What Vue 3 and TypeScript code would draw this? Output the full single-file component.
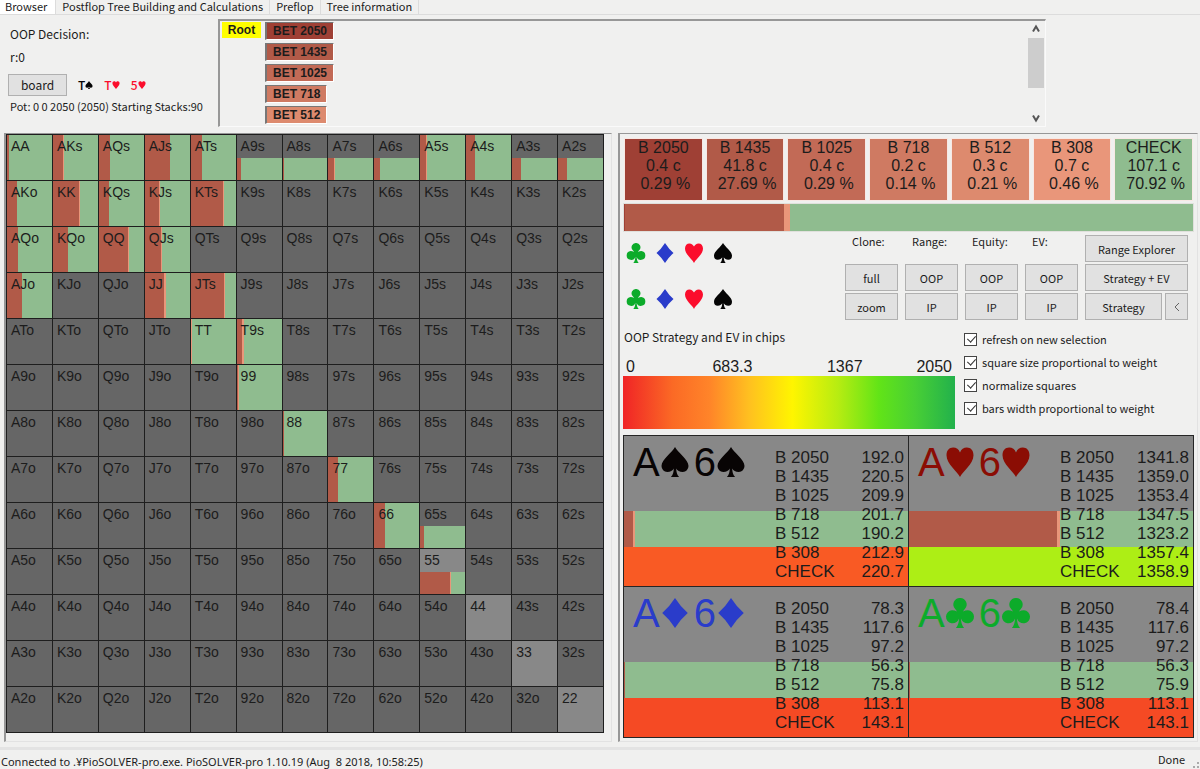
<script setup lang="ts">
import { ref } from 'vue'

type Suit = 'club' | 'diamond' | 'heart' | 'spade'

interface Cell {
  name: string
  red: number
  pink: number
  height: number
  light: boolean
}

const BET = '#b15a48'
const EDGE = '#e9967a'
const CHECK = '#8fbc8f'

const tabs = ['Browser', 'Postflop Tree Building and Calculations', 'Preflop', 'Tree information']

const suitPaths: Record<Suit, string> = {
  club: 'M10 0a4.3 4.3 0 0 1 3.2 7.3c-.4.5-.9 1-1.2 1.7 1-.6 2.1-.9 3.3-.9a4.4 4.4 0 1 1-4.6 5.6c0 2.5.6 4.7 2 6.300H7.300c1.400-1.600 2-3.800 2-6.300A4.400 4.400 0 1 1 4.700 8.100c1.200 0 2.300.3 3.300.9-.3-.7-.8-1.200-1.200-1.700A4.300 4.300 0 0 1 10 0z',
  diamond: 'M10 0Q13.800 6 18.500 10Q13.800 14 10 20Q6.200 14 1.500 10Q6.200 6 10 0z',
  heart: 'M10 20C8.600 16.500 1 11.500 1 5.500C1 2.200 3 .4 5.400 .4C7.600 .4 9.200 1.700 10 3.600C10.800 1.700 12.400 .4 14.600 .4C17 .4 19 2.200 19 5.500C19 11.500 11.400 16.500 10 20z',
  spade: 'M10 0C11.600 3.500 19 8.300 19 12.700A4 4 0 0 1 15.200 16.700C13 16.700 11.600 15.600 10.800 14.300C10.900 16.600 11.300 18.500 12.700 20H7.300C8.700 18.500 9.100 16.600 9.200 14.300C8.400 15.600 7 16.700 4.800 16.700A4 4 0 0 1 1 12.700C1 8.300 8.400 3.500 10 0z',
}
const suits: Suit[] = ['club', 'diamond', 'heart', 'spade']

const board: { rank: string; suit: Suit }[] = [
  { rank: 'T', suit: 'spade' },
  { rank: 'T', suit: 'heart' },
  { rank: '5', suit: 'heart' },
]

const actions = [
  { label: 'B 2050', node: 'BET 2050', combos: '0.4 c', share: '0.29 %', color: '#9f4035' },
  { label: 'B 1435', node: 'BET 1435', combos: '41.8 c', share: '27.69 %', color: '#b15a48' },
  { label: 'B 1025', node: 'BET 1025', combos: '0.4 c', share: '0.29 %', color: '#c26a56' },
  { label: 'B 718', node: 'BET 718', combos: '0.2 c', share: '0.14 %', color: '#cf7a62' },
  { label: 'B 512', node: 'BET 512', combos: '0.3 c', share: '0.21 %', color: '#dd8a6e' },
  { label: 'B 308', node: 'BET 308', combos: '0.7 c', share: '0.46 %', color: '#e9967a' },
  { label: 'CHECK', node: 'CHECK', combos: '107.1 c', share: '70.92 %', color: '#8fbc8f' },
]
const treeNodes = actions.slice(0, 5)

// [bet share %, small bet share %, weight %]
const mix: Record<string, [number, number, number]> = {
  AA: [4, 0, 100], AKs: [22, 2, 100], AQs: [24, 0, 100], AJs: [56, 0, 100], ATs: [24, 0, 100],
  A9s: [9, 0, 50], A8s: [2, 0, 50], A7s: [13, 3, 50], A6s: [13, 0, 50], A5s: [13, 3, 100],
  A4s: [20, 0, 100], A3s: [20, 0, 50], A2s: [20, 0, 50],
  AKo: [22, 0, 100], KK: [57, 2, 100], KQs: [22, 0, 100], KJs: [32, 2, 100], KTs: [71, 2, 100],
  AQo: [25, 0, 100], KQo: [33, 0, 100], QQ: [64, 3, 100], QJs: [35, 2, 100],
  AJo: [34, 0, 100], JJ: [43, 3, 100], JTs: [73, 2, 100],
  TT: [1, 2, 100], T9s: [12, 3, 100], '99': [2, 2, 100], '88': [2, 0, 100],
  '77': [22, 0, 100], '66': [24, 0, 100], '65s': [8, 0, 50], '55': [67, 3, 50],
}
const lightHands = ['55', '44', '33', '22']

const ranks = 'AKQJT98765432'.split('')
const matrix: Cell[][] = ranks.map((row, r) =>
  ranks.map((col, c) => {
    const name = r === c ? row + col : r < c ? row + col + 's' : col + row + 'o'
    const [red, pink, height] = mix[name] ?? [0, 0, 0]
    return { name, red, pink, height, light: lightHands.includes(name) }
  }),
)

function stripe(red: number, pink: number): string {
  return `linear-gradient(90deg, ${BET} ${red}%, ${EDGE} ${red}% ${red + pink}%, ${CHECK} ${red + pink}%)`
}

function cellStyle(cell: Cell) {
  if (!cell.height) return undefined
  return { backgroundImage: stripe(cell.red, cell.pink), backgroundSize: `100% ${cell.height}%` }
}

const combos: { suit: Suit; color: string; red: number; pink: number; ev: string; values: string[] }[] = [
  { suit: 'spade', color: '#080404', red: 3, pink: 1, ev: '#f95a24', values: ['192.0', '220.5', '209.9', '201.7', '190.2', '212.9', '220.7'] },
  { suit: 'heart', color: '#8b0d04', red: 52, pink: 1, ev: '#adee15', values: ['1341.8', '1359.0', '1353.4', '1347.5', '1323.2', '1357.4', '1358.9'] },
  { suit: 'diamond', color: '#2a3cca', red: 0, pink: 0, ev: '#f54a24', values: ['78.3', '117.6', '97.2', '56.3', '75.8', '113.1', '143.1'] },
  { suit: 'club', color: '#0cab2a', red: 0, pink: 0, ev: '#f54a24', values: ['78.4', '117.6', '97.2', '56.3', '75.9', '113.1', '143.1'] },
]

const options = ref([
  { id: 'refresh', label: 'refresh on new selection', on: true },
  { id: 'square', label: 'square size proportional to weight', on: true },
  { id: 'normalize', label: 'normalize squares', on: true },
  { id: 'bars', label: 'bars width proportional to weight', on: true },
])
</script>

<template>
  <div class="app">
    <nav class="tabs" role="tablist">
      <button v-for="(tab, i) in tabs" :key="tab" class="tab" :class="{ active: i === 0 }" role="tab" :aria-selected="i === 0">{{ tab }}</button>
    </nav>

    <header class="top">
      <section class="info">
        <p class="decision">OOP Decision:</p>
        <p class="node">r:0</p>
        <div class="board">
          <button class="btn">board</button>
          <span v-for="(card, i) in board" :key="i" class="card" :class="card.suit">
            {{ card.rank }}<svg class="mini" viewBox="0 0 20 20"><path :d="suitPaths[card.suit]" /></svg>
          </span>
        </div>
        <p class="pot">Pot: 0 0 2050 (2050) Starting Stacks:90</p>
      </section>
      <section class="tree">
        <button class="root">Root</button>
        <ul class="nodes">
          <li v-for="n in treeNodes" :key="n.node">
            <button class="bet" :style="{ background: n.color }">{{ n.node }}</button>
          </li>
        </ul>
        <div class="scroll">
          <svg class="arrow" viewBox="0 0 10 10"><path d="M2 7.500L5 2.500L8 7.500" /></svg>
          <div class="thumb"></div>
          <svg class="arrow" viewBox="0 0 10 10"><path d="M2 2.500L5 7.500L8 2.500" /></svg>
        </div>
      </section>
    </header>

    <main class="main">
      <section class="panel left">
        <table class="matrix">
          <tbody>
            <tr v-for="(row, r) in matrix" :key="r">
              <td v-for="cell in row" :key="cell.name" :class="{ light: cell.light }" :style="cellStyle(cell)">{{ cell.name }}</td>
            </tr>
          </tbody>
        </table>
      </section>

      <section class="panel right">
        <div class="cards">
          <button v-for="a in actions" :key="a.label" class="action" :style="{ background: a.color }">
            <span>{{ a.label }}</span>
            <span>{{ a.combos }}</span>
            <span class="share">{{ a.share }}</span>
          </button>
        </div>
        <div class="total"><i class="t2050"></i><i class="t1435"></i><i class="t308"></i></div>

        <div class="controls">
          <div class="filters">
            <div v-for="n in 2" :key="n" class="suits">
              <button v-for="s in suits" :key="s" class="suit" :class="s" :aria-label="s">
                <svg viewBox="0 0 20 20"><path :d="suitPaths[s]" /></svg>
              </button>
            </div>
          </div>
          <div class="grid">
            <span class="head">Clone:</span>
            <span class="head">Range:</span>
            <span class="head">Equity:</span>
            <span class="head">EV:</span>
            <button class="btn">Range Explorer</button>
            <button class="btn">full</button>
            <button class="btn">OOP</button>
            <button class="btn">OOP</button>
            <button class="btn">OOP</button>
            <button class="btn">Strategy + EV</button>
            <button class="btn">zoom</button>
            <button class="btn">IP</button>
            <button class="btn">IP</button>
            <button class="btn">IP</button>
            <div class="split">
              <button class="btn">Strategy</button>
              <button class="btn" aria-label="collapse">
                <svg class="back" viewBox="0 0 10 12"><path d="M7.500 1L2.500 6L7.500 11" /></svg>
              </button>
            </div>
          </div>
        </div>

        <div class="legend-row">
          <div class="legend">
            <p class="caption">OOP Strategy and EV in chips</p>
            <div class="scale"><span>0</span><span>683.3</span><span>1367</span><span>2050</span></div>
            <div class="ramp"></div>
          </div>
          <div class="options">
            <label v-for="o in options" :key="o.id" class="option" :for="o.id">
              <input :id="o.id" v-model="o.on" type="checkbox" />
              <span>{{ o.label }}</span>
            </label>
          </div>
        </div>

        <div class="combos">
          <article v-for="c in combos" :key="c.suit" class="combo">
            <div class="layers">
              <div class="mix" :class="{ thin: !c.red }" :style="{ backgroundImage: stripe(c.red, c.pink) }"></div>
              <div class="ev" :style="{ background: c.ev }"></div>
            </div>
            <div class="hand" :style="{ color: c.color }">
              <span>A</span><svg viewBox="0 0 20 20"><path :d="suitPaths[c.suit]" /></svg>
              <span>6</span><svg viewBox="0 0 20 20"><path :d="suitPaths[c.suit]" /></svg>
            </div>
            <table class="evs">
              <tbody>
                <tr v-for="(a, i) in actions" :key="a.label">
                  <th scope="row">{{ a.label }}</th>
                  <td>{{ c.values[i] }}</td>
                </tr>
              </tbody>
            </table>
          </article>
        </div>
      </section>
    </main>

    <footer class="status">
      <span class="conn">Connected to .¥PioSOLVER-pro.exe. PioSOLVER-pro 1.10.19 (Aug&nbsp; 8 2018, 10:58:25)</span>
      <span class="done">Done</span>
      <svg class="grip" viewBox="0 0 8 8"><path d="M5 0h2v2h-2zM5 4h2v2h-2zM1 4h2v2h-2z" /></svg>
    </footer>
  </div>
</template>

<style>
body {
  background: #f0f0ef;
}
</style>

<style scoped>
.app {
  display: flex;
  flex-direction: column;
  min-height: 100vh;
  color: #1c1c1c;
  font: 11px/16px "Noto Sans CJK JP", "Liberation Sans", sans-serif;
}
.app * {
  box-sizing: border-box;
}
p {
  margin: 0;
}
button {
  margin: 0;
  padding: 0;
  border: 0;
  background: none;
  color: inherit;
  font: inherit;
  white-space: nowrap;
}
svg {
  display: block;
  fill: currentColor;
}
.tabs {
  display: flex;
  height: 15px;
  border-bottom: 1px solid #dcdcdc;
}
.tab {
  height: 14px;
  padding: 0 6px 2px;
  border-right: 1px solid #dcdcdc;
  line-height: 12px;
}
.tab.active {
  padding: 0 8px 2px 5px;
  background: #fff;
}
.top {
  display: flex;
  padding: 4px 154px 6px 8px;
}
.info {
  width: 210px;
  padding: 7px 0 0 2px;
}
.decision,
.node,
.card,
.board .btn,
.caption {
  font-size: 12px;
}
.node {
  margin-top: 7px;
}
.board {
  display: flex;
  align-items: center;
  gap: 11px;
  margin: 9px 0 2px -2px;
}
.btn {
  display: flex;
  align-items: center;
  justify-content: center;
  border: 1px solid #b0b0b0;
  background: #e1e1e1;
}
.board .btn {
  width: 59px;
  height: 22px;
}
.card {
  display: flex;
  align-items: center;
  font-weight: 500;
}
.mini {
  width: 8px;
  height: 8px;
}
.spade {
  color: #050505;
}
.heart {
  color: #fb0d2c;
}
.diamond {
  color: #2a3cca;
}
.club {
  color: #0cab2a;
}
.pot {
  white-space: nowrap;
}
.tree {
  display: flex;
  flex: 1;
  align-items: flex-start;
  height: 108px;
  padding-left: 2px;
  border: 1px solid #fafafa;
  border-top: 2px solid #979797;
  border-left: 2px solid #979797;
  font: bold 12px/16px "Liberation Sans", sans-serif;
}
.root {
  width: 39px;
  margin-top: 1px;
  background: #ff0;
}
.nodes {
  display: grid;
  gap: 3px;
  flex: 1;
  margin: 0 0 0 4px;
  padding: 1px 0 0;
  list-style: none;
}
.nodes li {
  display: flex;
}
.bet {
  padding: 0 6px;
  border: 1px solid #fff;
  border-top-color: #777;
  border-left: 2px solid #777;
}
.scroll {
  display: flex;
  flex-direction: column;
  align-self: stretch;
  width: 16px;
  margin-right: 1px;
  padding: 3px 0;
}
.arrow {
  width: 10px;
  height: 10px;
  margin: 0 3px;
}
.arrow path {
  fill: none;
  stroke: #555;
  stroke-width: 2;
}
.thumb {
  flex: 1;
  margin: 4px 0 25px;
  background: #cdcdcd;
}
.main {
  display: grid;
  grid-template-columns: 608fr 580fr;
  gap: 6px;
  padding: 0 2px 0 4px;
}
.panel {
  border: 1px solid #e2e2e2;
  border-top-color: #979797;
  border-left: 2px solid #979797;
}
.left {
  padding: 0 7px 8px 0;
}
.matrix {
  width: 100%;
  table-layout: fixed;
  border-collapse: collapse;
  font: 14px/16px "Liberation Sans", sans-serif;
}
.matrix td {
  height: 46px;
  padding: 3px 0 0 4px;
  border: 1px solid #1e1e1e;
  background: #666 no-repeat left bottom;
  vertical-align: top;
}
.matrix td.light {
  background-color: #888;
}
.right {
  padding: 4px 3px 3px;
}
.cards {
  display: grid;
  grid-template-columns: repeat(7, 1fr);
  gap: 3px;
  padding: 0 1px;
}
.action {
  display: flex;
  flex-direction: column;
  align-items: center;
  height: 63px;
  border: 1px solid #f8e8e4;
  font: 16px/18px "Liberation Sans", sans-serif;
}
.share {
  padding-left: 4px;
}
.total {
  display: flex;
  height: 29px;
  margin-top: 2px;
  border: 1px solid #e0e0dc;
  background: #8fbc8f;
}
.t2050 {
  width: 1px;
  background: #9f4035;
}
.t1435 {
  width: 28%;
  background: #b15a48;
}
.t308 {
  width: 1%;
  background: #e9967a;
}
.controls {
  display: flex;
  justify-content: space-between;
  padding: 3px 6px 0 3px;
}
.filters {
  display: grid;
  gap: 26px;
  align-content: start;
  padding-top: 8px;
}
.suits {
  display: flex;
  gap: 9px;
}
.suit svg {
  width: 20px;
  height: 20px;
}
.grid {
  display: grid;
  grid-template-columns: repeat(4, 53px) 103px;
  grid-auto-rows: 27px;
  gap: 2px 7px;
}
.head {
  padding-left: 7px;
  line-height: 12px;
}
.split {
  display: grid;
  grid-template-columns: 1fr 23px;
  gap: 3px;
}
.back {
  width: 8px;
  height: 12px;
}
.back path {
  fill: none;
  stroke: #444;
  stroke-width: 1;
}
.legend-row {
  display: grid;
  grid-template-columns: 332fr 230fr;
  gap: 9px;
  padding-top: 9px;
}
.caption {
  padding-left: 1px;
}
.scale {
  display: grid;
  grid-template-columns: 86fr 114fr 89fr auto;
  margin-top: 13px;
  padding: 0 3px;
  font: 16px/18px "Liberation Sans", sans-serif;
}
.ramp {
  height: 53px;
  background: linear-gradient(90deg, #f02426, #fb6a25 15%, #ff8429 26%, #ffc020 38%, #fff500 51%, #b5ec12 65%, #62e417 77%, #48cf35 88%, #22b14c);
}
.options {
  display: flex;
  flex-direction: column;
  gap: 7px;
  padding-top: 2px;
}
.option {
  display: flex;
  align-items: center;
  gap: 5px;
  white-space: nowrap;
}
.option input {
  appearance: none;
  width: 13px;
  height: 13px;
  margin: 0;
  border: 1px solid #444;
  background: #fff;
}
.option input:checked::after {
  content: "";
  display: block;
  width: 4px;
  height: 7px;
  margin: 0 0 0 4px;
  border: solid #333;
  border-width: 0 1px 1px 0;
  transform: rotate(42deg);
}
.combos {
  display: grid;
  grid-template-columns: 1fr 1fr;
  margin-top: 6px;
  border: solid #262626;
  border-width: 1px 0 0 1px;
}
.combo {
  position: relative;
  display: flex;
  justify-content: space-between;
  height: 151px;
  padding: 10px 4px 0 9px;
  border: solid #262626;
  border-width: 0 1px 1px 0;
  background: #888;
}
.layers {
  position: absolute;
  inset: 50% 0 0;
  display: flex;
  flex-direction: column;
}
.mix {
  flex: 36;
}
.ev {
  flex: 38;
}
.mix.thin {
  border-left: 1px solid #b15a48;
}
.hand {
  position: relative;
  display: flex;
  align-items: center;
  height: 32px;
  font: 40px/32px "Liberation Sans", sans-serif;
}
.hand svg {
  width: 30px;
  height: 32px;
  margin-right: 4px;
}
.evs {
  position: relative;
  width: 129px;
  margin-top: 2px;
  align-self: flex-start;
  border-collapse: collapse;
  font: 17px/19px "Liberation Sans", sans-serif;
}
.evs th,
.evs td {
  padding: 0;
  font-weight: normal;
  text-align: left;
}
.evs td {
  text-align: right;
}
.status {
  display: flex;
  flex: 1;
  align-items: flex-start;
  margin-top: 5px;
  border-top: 3px solid #e3e3e3;
}
.conn {
  flex: 1;
  padding: 4px 0 0 1px;
  font: 11px/16px "Noto Sans", sans-serif;
}
.done {
  padding-top: 1px;
}
.grip {
  width: 8px;
  height: 8px;
  margin: 12px 0 0 7px;
  color: #aaa;
}
</style>
